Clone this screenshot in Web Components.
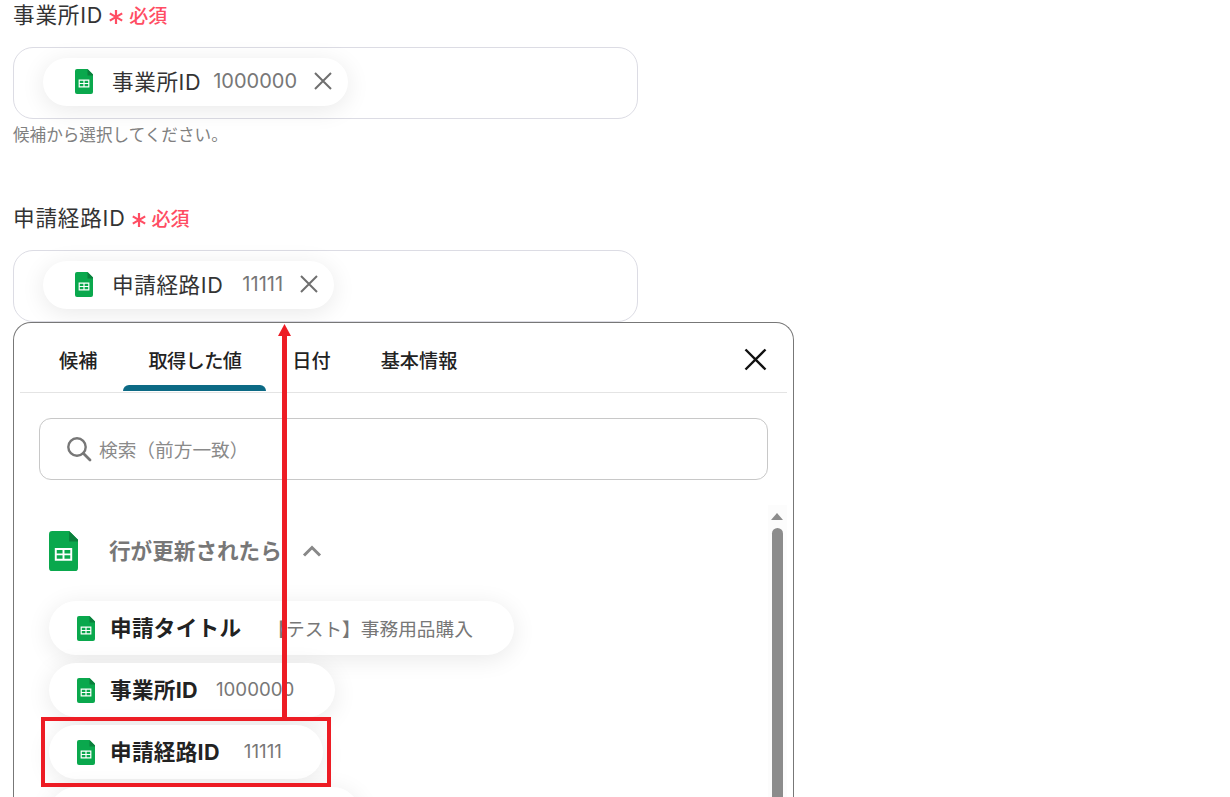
<!DOCTYPE html>
<html lang="ja">
<head>
<meta charset="utf-8">
<title>申請経路ID</title>
<style>
  html, body { margin: 0; height: 797px; overflow: hidden; background: #fff; }
  body { font-family: Inter, "Noto Sans CJK JP", "Noto Sans", sans-serif; color: #333; }
  #page { position: relative; height: 797px; overflow: hidden; }
</style>
</head>
<body>
<div id="page">
  <x-field label="事業所ID" help="候補から選択してください。" style="height:205px">
    <x-chip name="事業所ID" value="1000000" removable style="--gap:12px"></x-chip>
  </x-field>
  <x-field label="申請経路ID">
    <x-chip name="申請経路ID" value="11111" removable style="--gap:19px"></x-chip>
  </x-field>
  <x-panel>
    <x-group title="行が更新されたら">
      <x-chip variant="list" name="申請タイトル" value="【テスト】事務用品購入" style="--gap:26px"></x-chip>
      <x-chip variant="list" name="事業所ID" value="1000000" style="--gap:18px"></x-chip>
      <x-chip variant="list" name="申請経路ID" value="11111" style="--gap:24px"></x-chip>
      <x-chip variant="list" style="width:311px"></x-chip>
    </x-group>
  </x-panel>
  <x-annotation></x-annotation>
</div>

<script>
class SheetIcon extends HTMLElement {
  constructor() {
    super();
    this.attachShadow({ mode: 'open' });
    this.shadowRoot.innerHTML = `
      <style>
        :host { display: inline-flex; width: var(--w, 18px); flex: none; }
        svg { display: block; width: 100%; height: auto; }
      </style>
      <svg viewBox="0 0 18 25">
        <path d="M2 0h10.5L18 5.5V23a2 2 0 0 1-2 2H2a2 2 0 0 1-2-2V2a2 2 0 0 1 2-2z" fill="#0aa84d"/>
        <path d="M12.5 0L18 5.5V6.5h-5.5z" fill="#0a7f3c"/>
        <path fill-rule="evenodd" fill="#fff" d="M3.6 10.6h10.8v7.8H3.6zM4.8 11.8v2.1h3.6v-2.1zM9.6 11.8v2.1h3.6v-2.1zM4.8 15.1v2.1h3.6v-2.1zM9.6 15.1v2.1h3.6v-2.1z"/>
      </svg>`;
  }
}
customElements.define('x-sheet-icon', SheetIcon);

class ChipElement extends HTMLElement {
  constructor() {
    super();
    this.attachShadow({ mode: 'open' });
  }

  connectedCallback() {
    const name = this.getAttribute('name') || '';
    const value = this.getAttribute('value') || '';
    const close = this.hasAttribute('removable') ? `
      <svg class="close" viewBox="0 0 18 18"><path d="M1 1l16 16M17 1L1 17" stroke="#6f6f6f" stroke-width="2" fill="none"/></svg>` : '';
    const content = name ? `
      <x-sheet-icon></x-sheet-icon>
      <span class="name">${name}</span>
      <span class="value">${value}</span>${close}` : '';
    this.shadowRoot.innerHTML = `
      <style>
        :host {
          display: flex; width: max-content; align-items: center; box-sizing: border-box;
          height: 48px; padding: 0 16px 2px 32px; background: #fff; border-radius: 24px;
          box-shadow: 0 4px 24px rgba(0,0,0,.09);
        }
        .name { margin: 0 0 2px 19px; font-size: 21.6px; letter-spacing: .6px; color: #333; white-space: nowrap; }
        .value { margin-left: var(--gap, 14px); font-size: 20px; color: #777; white-space: nowrap; }
        .close { width: 18px; height: 18px; margin-left: 17px; flex: none; }
        :host([variant="list"]) { height: 54px; border-radius: 27px; padding: 0 41px 0 28px; }
        :host([variant="list"]) .name { margin: 0 0 3px 15px; font-weight: 700; letter-spacing: .3px; color: #222; }
        :host([variant="list"]) .value { font-size: 18.7px; margin-bottom: 1px; }
      </style>${content}`;
  }
}
customElements.define('x-chip', ChipElement);

class FieldElement extends HTMLElement {
  constructor() {
    super();
    this.attachShadow({ mode: 'open' });
  }

  connectedCallback() {
    const help = this.getAttribute('help');
    this.shadowRoot.innerHTML = `
      <style>
        :host { display: block; padding: 0 13px; box-sizing: border-box; }
        .label { display: flex; align-items: center; height: 30px; margin-top: -2px; font-size: 21.6px; letter-spacing: .8px; color: #333; }
        .req { display: flex; align-items: center; margin: 2px 0 0 6px; font-size: 19px; font-weight: 500; letter-spacing: 0; color: #ff4d63; }
        .req svg { width: 14px; height: 14px; margin: 6px 6px 0 0; }
        .box {
          box-sizing: border-box; width: 625px; height: 72px; margin-top: 19px;
          padding: 10px 29px; border: 1px solid #dcdce4; border-radius: 20px; background: #fff;
        }
        .help { margin-top: 5px; font-size: 16.6px; line-height: 22px; color: #808080; }
      </style>
      <div class="label">${this.getAttribute('label')}
        <span class="req">
          <svg viewBox="0 0 14 14"><path d="M7 0v14M.8 3.4l12.4 7.2M13.2 3.4L.8 10.6" stroke="#ff4d63" stroke-width="2.2"/></svg>必須
        </span>
      </div>
      <div class="box"><slot></slot></div>
      ${help ? `<div class="help">${help}</div>` : ''}`;
  }
}
customElements.define('x-field', FieldElement);

class PanelElement extends HTMLElement {
  constructor() {
    super();
    this.attachShadow({ mode: 'open' });
    const tabs = ['候補', '取得した値', '日付', '基本情報'];
    this.shadowRoot.innerHTML = `
      <style>
        :host {
          display: block; box-sizing: border-box; width: 781px; height: 520px; margin-left: 13px;
          padding: 0 6px; background: #fff; border: 1px solid #777; border-bottom: 0; border-radius: 18px 18px 0 0;
        }
        .tabs { display: flex; align-items: center; height: 69px; border-bottom: 1px solid #e4e4e4; position: relative; }
        .tab { font-size: 19.2px; font-weight: 500; color: #222; position: relative; line-height: 76px; height: 69px; }
        .tab:nth-child(1) { margin-left: 39px; }
        .tab:nth-child(2) { margin-left: 51px; letter-spacing: -.6px; }
        .tab:nth-child(2)::after {
          content: ""; position: absolute; left: -25px; right: -25px; bottom: 1px; height: 6px;
          background: #0c6a85; border-radius: 6px 6px 0 0;
        }
        .tab:nth-child(3) { margin-left: 51px; }
        .tab:nth-child(4) { margin-left: 50px; }
        .x { position: absolute; right: 20px; top: 25px; width: 23px; height: 23px; }
        .search {
          box-sizing: border-box; display: flex; align-items: center; width: 729px; height: 62px;
          margin: 25px 0 0 19px; padding: 0 0 1px 26px; border: 1px solid #c8c8c8; border-radius: 12px;
          font-size: 18.7px; color: #8a8a8a;
        }
        .search svg { width: 26px; height: 26px; margin-right: 7px; }
        .body { position: relative; margin-top: 25px; height: 292px; overflow: hidden; }
        .scroll {
          position: absolute; right: 0; top: 0; bottom: 0; width: 19px; background: #fcfcfc;
        }
        .scroll i {
          position: absolute; left: 3px; top: 8px; width: 0; height: 0;
          border: 6.5px solid transparent; border-top: 0; border-bottom: 7px solid #8c8c8c;
        }
        .scroll b { position: absolute; left: 4px; top: 23px; width: 11px; bottom: 0; background: #8c8c8c; border-radius: 6px 6px 0 0; }
      </style>
      <div class="tabs">
        ${tabs.map(t => `<div class="tab">${t}</div>`).join('')}
        <svg class="x" viewBox="0 0 23 23"><path d="M1.5 1.5l20 20M21.5 1.5l-20 20" stroke="#111" stroke-width="2.4" fill="none"/></svg>
      </div>
      <div class="search">
        <svg viewBox="0 0 26 26"><circle cx="11" cy="11" r="8.7" stroke="#777" stroke-width="2.4" fill="none"/><path d="M17.5 17.5l6.5 6.5" stroke="#777" stroke-width="2.8" stroke-linecap="round"/></svg>
        検索（前方一致）
      </div>
      <div class="body">
        <slot></slot>
        <div class="scroll"><i></i><b></b></div>
      </div>`;
  }
}
customElements.define('x-panel', PanelElement);

class GroupElement extends HTMLElement {
  constructor() {
    super();
    this.attachShadow({ mode: 'open' });
  }

  connectedCallback() {
    this.shadowRoot.innerHTML = `
      <style>
        :host { display: block; padding: 25px 0 0 29px; }
        .head { display: flex; align-items: center; height: 42px; font-size: 21.6px; font-weight: 700; color: #777; --w: 29px; }
        .head span { margin: 0 0 4px 31px; }
        .head svg { width: 20px; height: 12px; margin-left: 20px; }
        .list { display: flex; flex-direction: column; gap: 8px; margin-top: 29px; }
      </style>
      <div class="head">
        <x-sheet-icon></x-sheet-icon>
        <span>${this.getAttribute('title')}</span>
        <svg viewBox="0 0 20 12"><path d="M2 10.5l8-8 8 8" stroke="#888" stroke-width="3" fill="none"/></svg>
      </div>
      <div class="list"><slot></slot></div>`;
  }
}
customElements.define('x-group', GroupElement);

// red markup drawn over the screenshot: arrow and highlight box
class AnnotationElement extends HTMLElement {
  constructor() {
    super();
    this.attachShadow({ mode: 'open' });
    this.shadowRoot.innerHTML = `
      <style>
        :host { position: absolute; left: 0; top: 0; width: 100%; height: 100%; pointer-events: none; }
        svg { position: absolute; left: 0; top: 0; }
      </style>
      <svg width="1230" height="797" viewBox="0 0 1230 797">
        <rect x="43" y="719" width="286" height="66" fill="none" stroke="#ed1c24" stroke-width="4"/>
        <rect x="282" y="335" width="5" height="383" fill="#ed1c24"/>
        <path d="M284.5 324L291 336H278z" fill="#ed1c24"/>
      </svg>`;
  }
}
customElements.define('x-annotation', AnnotationElement);
</script>
</body>
</html>
